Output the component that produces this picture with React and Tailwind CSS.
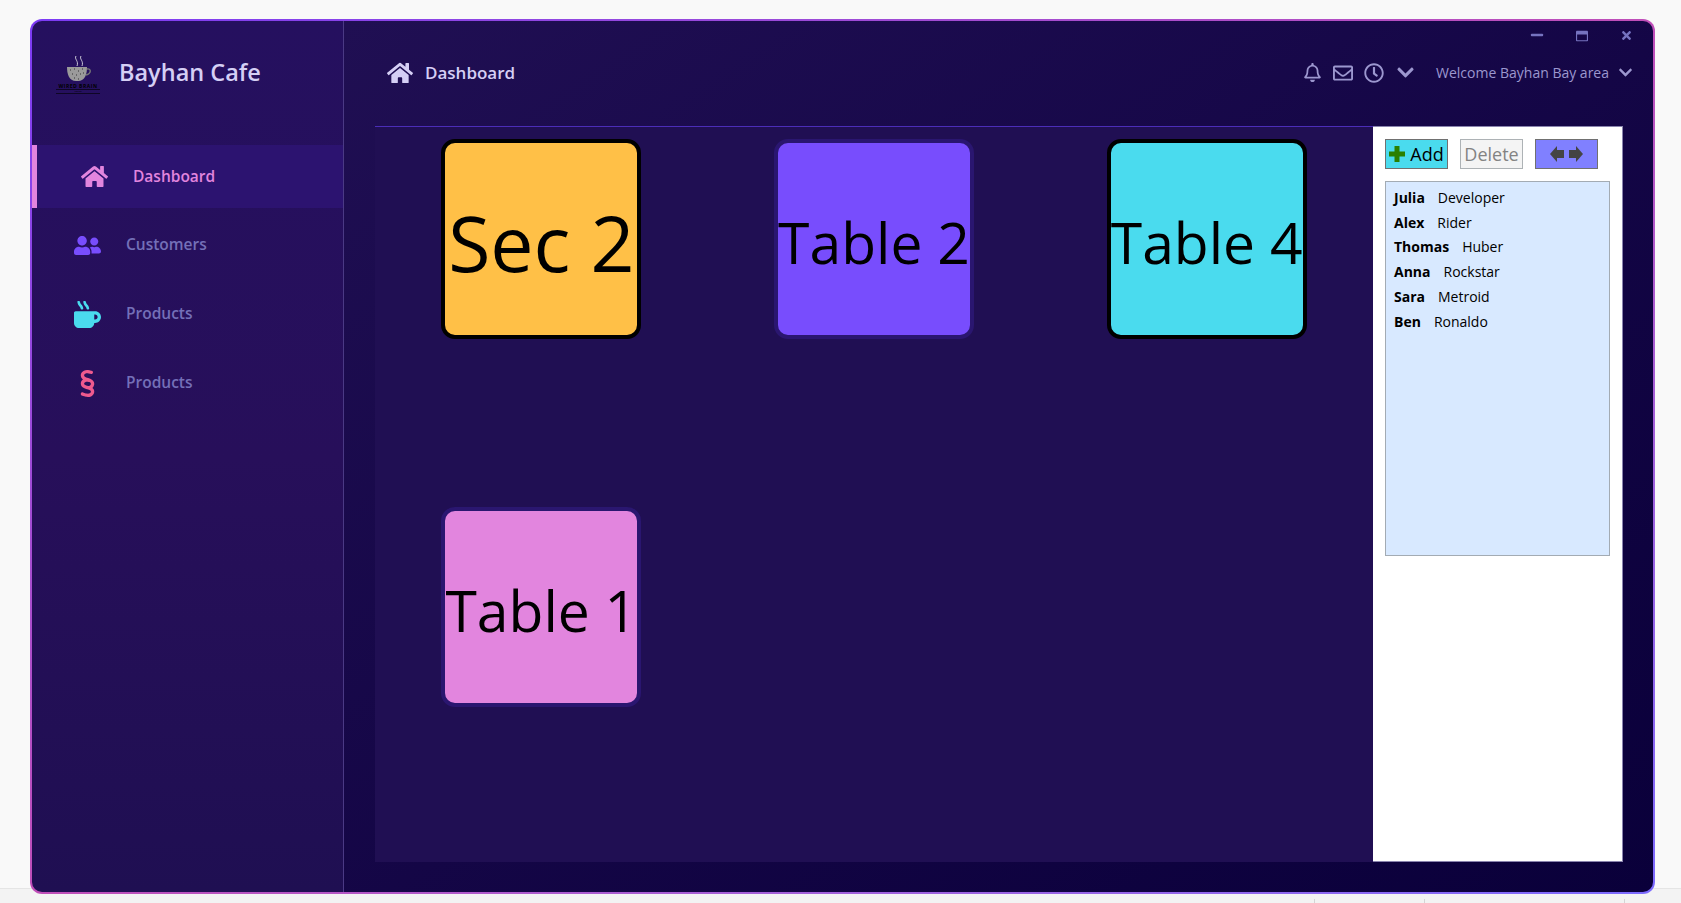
import { FaHome, FaUserFriends, FaMugHot, FaRegBell, FaRegEnvelope, FaRegClock, FaChevronDown, FaMinus, FaRegWindowMaximize, FaTimes } from "react-icons/fa";
import { FaSection } from "react-icons/fa6";

const navItems = [
  { label: "Customers", icon: <FaUserFriends size={27} className="text-[#784DFD]" /> },
  { label: "Products", icon: <FaMugHot size={27} className="text-[#4ADBEE]" /> },
  { label: "Products", icon: <FaSection size={27} className="text-[#EF5A8E]" /> },
];

const people = [
  ["Julia", "Developer"],
  ["Alex", "Rider"],
  ["Thomas", "Huber"],
  ["Anna", "Rockstar"],
  ["Sara", "Metroid"],
  ["Ben", "Ronaldo"],
];

const Logo = () => (
  <div className="flex w-[44px] flex-col items-center">
    <svg width="28" height="27" viewBox="0 0 28 27">
      <path d="M12 1c-2 3 3 5 1 10M17 1c-2 3 3 5 1 10" stroke="#c9c6d6" strokeWidth="1" fill="none" />
      <path d="M3 12h20c0 7-2 14-9 14H12C5 26 3 19 3 12z" fill="#9a9a9a" />
      <path d="M23 14c4-1 5 4-1 6" stroke="#777" strokeWidth="1.4" fill="none" />
      <path d="M6 15h1M10 14h1M14 16h1M18 14h1M8 19h1M12 20h1M16 19h1M19 18h1M10 23h1M14 24h1" stroke="#333" strokeWidth="1.2" />
    </svg>
    <div className="mt-[1px] text-[5px] leading-[6px] font-bold tracking-[0.5px] whitespace-nowrap text-black">WIRED BRAIN</div>
    <div className="w-full border-t border-b border-black/60 text-center text-[2px] leading-[3px] text-black">COFFEE</div>
  </div>
);

const Card = ({ label, color, selected, big }) => (
  <div
    className={`flex h-[200px] w-[200px] items-center justify-center rounded-[14px] border-[4px] pt-[7px] whitespace-nowrap text-black ${color} ${
      selected ? "border-black" : "border-[#2A1670]"
    } ${big ? "text-[77px]" : "text-[57px]"}`}
  >
    {label}
  </div>
);

const App = () => {
  return (
    <div className="flex h-screen flex-col overflow-hidden bg-[#f9f9f9] pt-[19px] pl-[30px] font-['Open_Sans','Noto_Sans',sans-serif]">
      {/* window */}
      <div className="relative z-10 h-[875px] w-[1625px] shrink-0 rounded-[12px] bg-gradient-to-br from-[#7C3BF5] via-[#C04EB8] to-[#7C6BFF] p-[2px]">
        <div className="flex h-full overflow-hidden rounded-[10px]">
          {/* sidebar */}
          <aside className="flex w-[312px] shrink-0 flex-col border-r border-[#4B3A85] bg-gradient-to-b from-[#25105F] via-[#270F5A] to-[#1F0F52]">
            <div className="flex h-[124px] items-start pt-[34px] pl-[24px]">
              <Logo />
              <span className="mt-[1px] ml-[19px] text-[23.5px] leading-[32px] font-semibold text-[#D5CFF5]">Bayhan Cafe</span>
            </div>
            <div className="mb-[5.5px] flex h-[63px] items-center border-l-[5px] border-[#E285DE] bg-[#2C1370] pl-[44px]">
              <FaHome size={27} className="text-[#E285DE]" />
              <span className="ml-[25px] text-[15.5px] font-semibold text-[#E285DE]">Dashboard</span>
            </div>
            <div className="flex flex-col gap-[6px]">
              {navItems.map((item, i) => (
                <div key={i} className="flex h-[63px] items-center pl-[42px]">
                  <div className="flex w-[27px] justify-center">{item.icon}</div>
                  <span className="ml-[25px] text-[15.5px] font-semibold text-[#7470B8]">{item.label}</span>
                </div>
              ))}
            </div>
          </aside>

          {/* main */}
          <main className="flex min-w-0 flex-1 flex-col bg-gradient-to-br from-[#200F53] to-[#0A003A] pr-[30px] pb-[30px] pl-[31px]">
            <div className="flex h-[105px] shrink-0 flex-col">
              <div className="-mr-[10px] flex h-[21px] items-end justify-end gap-[32px] text-[#7673C0]">
                <FaMinus size={14} />
                <FaRegWindowMaximize size={12} />
                <FaTimes size={13} />
              </div>
              <div className="-mr-[10px] flex flex-1 items-start justify-between pt-[18px]">
                <div className="flex items-center pl-[12px]">
                  <FaHome size={26} className="text-[#D5CFF5]" />
                  <span className="ml-[12px] text-[17px] font-semibold text-[#D5CFF5]">Dashboard</span>
                </div>
                <div className="flex items-center pt-[2px] text-[#9C97CF]">
                  <FaRegBell size={19} />
                  <FaRegEnvelope size={20} className="ml-[11px]" />
                  <FaRegClock size={20} className="ml-[11px]" />
                  <FaChevronDown size={19} className="ml-[12px]" />
                  <span className="ml-[21px] text-[14px]">Welcome Bayhan Bay area</span>
                  <FaChevronDown size={15} className="ml-[9px]" />
                </div>
              </div>
            </div>

            <div className="flex min-h-0 flex-1">
              <div className="grid flex-1 grid-cols-3 content-start justify-items-center gap-y-[168px] border-t border-[#4B2DB8] bg-[#200F53] pt-[12px]">
                <Card label="Sec 2" color="bg-[#FFC047]" selected big />
                <Card label="Table 2" color="bg-[#784DFD]" />
                <Card label="Table 4" color="bg-[#4ADBEE]" selected />
                <Card label="Table 1" color="bg-[#E285DE]" />
              </div>

              {/* side panel */}
              <div className="w-[250px] shrink-0 border-t border-r border-b border-[#8A84AE] bg-white px-[12px] pt-[12px]">
                <div className="flex gap-[12px]">
                  <button className="flex h-[30px] w-[63px] items-center justify-center gap-[5px] border border-[#707070] bg-[#4ADBEE] text-[18px] text-black">
                    <svg width="16" height="16" viewBox="0 0 16 16"><path d="M5.500 0h5v5.500H16v5h-5.500V16h-5v-5.500H0v-5h5.500z" fill="#2A8000" /></svg>
                    Add
                  </button>
                  <button className="h-[30px] w-[63px] border border-[#ADB2B5] bg-[#F4F4F4] text-[18px] text-[#838383]">Delete</button>
                  <button className="flex h-[30px] w-[63px] items-center justify-center gap-[5px] border border-[#707070] bg-[#8080FF]">
                    <svg width="14" height="16" viewBox="0 0 14 16"><path d="M0 8l7-8v4h7v8H7v4z" fill="#444" /></svg>
                    <svg width="14" height="16" viewBox="0 0 14 16"><path d="M14 8L7 0v4H0v8h7v4z" fill="#444" /></svg>
                  </button>
                </div>
                <div className="mt-[12px] h-[375px] w-[225px] border border-[#A3ABB3] bg-[#D8E9FF] pt-[3px] pl-[8px] text-[14px] text-black">
                  {people.map(([first, last]) => (
                    <div key={first} className="flex h-[24.8px] items-center gap-[13px]">
                      <b className="font-bold">{first}</b>
                      <span>{last}</span>
                    </div>
                  ))}
                </div>
              </div>
            </div>
          </main>
        </div>
      </div>

      {/* bottom strip behind the window */}
      <div className="relative -mt-[6px] -ml-[30px] flex-1 border-t border-[#E5E5E5] bg-[#F3F3F3]">
        <div className="absolute bottom-0 left-[1314px] h-[4px] border-l border-[#D5D5D5]" />
        <div className="absolute bottom-0 left-[1424px] h-[4px] border-l border-[#D5D5D5]" />
        <div className="absolute bottom-0 left-[1624px] h-[4px] border-l border-[#D5D5D5]" />
      </div>
    </div>
  );
};

export default App;
